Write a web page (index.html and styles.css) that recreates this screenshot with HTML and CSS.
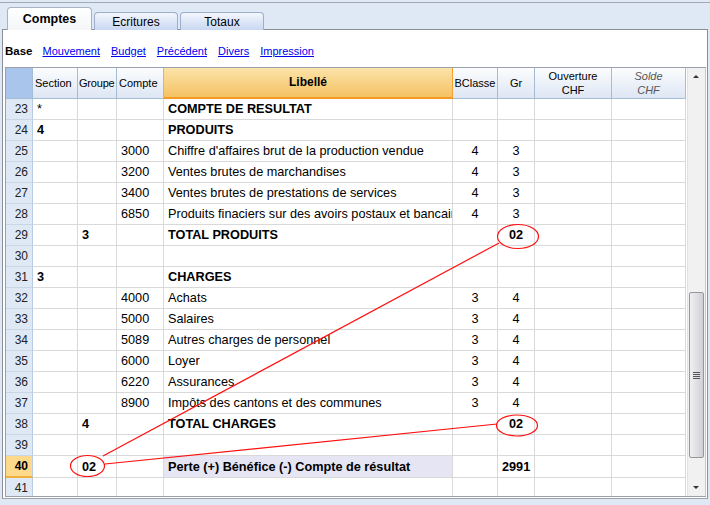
FILE: index.html
```html
<!DOCTYPE html>
<html lang="fr">
<head>
<meta charset="utf-8">
<title>Comptes</title>
<link rel="stylesheet" href="styles.css">
</head>
<body>
<div class="window">
  <div class="tabs">
    <div class="tab active">Comptes</div>
    <div class="tab">Ecritures</div>
    <div class="tab">Totaux</div>
  </div>
  <div class="panel">
    <div class="toolbar">
      <span class="cur">Base</span>
      <a href="#">Mouvement</a>
      <a href="#">Budget</a>
      <a href="#">Précédent</a>
      <a href="#">Divers</a>
      <a href="#">Impression</a>
    </div>
    <div class="grid">
      <div class="tablewrap">
        <table>
          <colgroup>
            <col class="c-num"><col class="c-sec"><col class="c-grp"><col class="c-cpt"><col class="c-lib"><col class="c-bcl"><col class="c-gr"><col class="c-ouv"><col class="c-sol">
          </colgroup>
          <thead>
            <tr>
              <th class="hnum"></th>
              <th class="hl">Section</th>
              <th class="hl tight">Groupe</th>
              <th class="hl">Compte</th>
              <th class="hlib">Libellé</th>
              <th>BClasse</th>
              <th>Gr</th>
              <th>Ouverture<br>CHF</th>
              <th class="hsol">Solde<br>CHF</th>
            </tr>
          </thead>
          <tbody>
            <tr><td class="num">23</td><td>*</td><td></td><td></td><td class="b">COMPTE DE RESULTAT</td><td></td><td></td><td></td><td></td></tr>
            <tr><td class="num">24</td><td class="b">4</td><td></td><td></td><td class="b">PRODUITS</td><td></td><td></td><td></td><td></td></tr>
            <tr><td class="num">25</td><td></td><td></td><td>3000</td><td>Chiffre d'affaires brut de la production vendue</td><td class="c">4</td><td class="c">3</td><td></td><td></td></tr>
            <tr><td class="num">26</td><td></td><td></td><td>3200</td><td>Ventes brutes de marchandises</td><td class="c">4</td><td class="c">3</td><td></td><td></td></tr>
            <tr><td class="num">27</td><td></td><td></td><td>3400</td><td>Ventes brutes de prestations de services</td><td class="c">4</td><td class="c">3</td><td></td><td></td></tr>
            <tr><td class="num">28</td><td></td><td></td><td>6850</td><td>Produits finaciers sur des avoirs postaux et bancaires</td><td class="c">4</td><td class="c">3</td><td></td><td></td></tr>
            <tr><td class="num">29</td><td></td><td class="b">3</td><td></td><td class="b">TOTAL PRODUITS</td><td></td><td class="c b">02</td><td></td><td></td></tr>
            <tr><td class="num">30</td><td></td><td></td><td></td><td></td><td></td><td></td><td></td><td></td></tr>
            <tr><td class="num">31</td><td class="b">3</td><td></td><td></td><td class="b">CHARGES</td><td></td><td></td><td></td><td></td></tr>
            <tr><td class="num">32</td><td></td><td></td><td>4000</td><td>Achats</td><td class="c">3</td><td class="c">4</td><td></td><td></td></tr>
            <tr><td class="num">33</td><td></td><td></td><td>5000</td><td>Salaires</td><td class="c">3</td><td class="c">4</td><td></td><td></td></tr>
            <tr><td class="num">34</td><td></td><td></td><td>5089</td><td>Autres charges de personnel</td><td class="c">3</td><td class="c">4</td><td></td><td></td></tr>
            <tr><td class="num">35</td><td></td><td></td><td>6000</td><td>Loyer</td><td class="c">3</td><td class="c">4</td><td></td><td></td></tr>
            <tr><td class="num">36</td><td></td><td></td><td>6220</td><td>Assurances</td><td class="c">3</td><td class="c">4</td><td></td><td></td></tr>
            <tr><td class="num">37</td><td></td><td></td><td>8900</td><td>Impôts des cantons et des communes</td><td class="c">3</td><td class="c">4</td><td></td><td></td></tr>
            <tr><td class="num">38</td><td></td><td class="b">4</td><td></td><td class="b">TOTAL CHARGES</td><td></td><td class="c b">02</td><td></td><td></td></tr>
            <tr><td class="num">39</td><td></td><td></td><td></td><td></td><td></td><td></td><td></td><td></td></tr>
            <tr class="sel"><td class="num">40</td><td></td><td class="b">02</td><td></td><td class="b lib-sel">Perte (+) Bénéfice (-) Compte de résultat</td><td></td><td class="c b">2991</td><td></td><td></td></tr>
            <tr><td class="num">41</td><td></td><td></td><td></td><td></td><td></td><td></td><td></td><td></td></tr>
          </tbody>
        </table>
      </div>
      <div class="scrollbar">
        <div class="arrow up"></div>
        <div class="track">
          <div class="thumb"><span class="grip"></span></div>
        </div>
        <div class="arrow down"></div>
      </div>
    </div>
  </div>
</div>
<svg class="notes" width="710" height="505" viewBox="0 0 710 505">
  <g fill="none" stroke="#ff1010" stroke-width="1.2">
    <ellipse cx="518" cy="236.5" rx="20.5" ry="12"/>
    <ellipse cx="517" cy="425.5" rx="20.5" ry="10.5"/>
    <ellipse cx="87.5" cy="466" rx="17" ry="10.5"/>
    <line x1="103" y1="456" x2="499" y2="243"/>
    <line x1="105" y1="464" x2="497" y2="424"/>
  </g>
</svg>
</body>
</html>
```

FILE: styles.css
```css
* { box-sizing: border-box; }
html, body { margin: 0; padding: 0; }
body {
  width: 710px;
  height: 505px;
  background: #dfe9f5;
  font-family: "Liberation Sans", Arial, sans-serif;
  font-size: 12.7px;
  color: #000;
  position: relative;
  overflow: hidden;
}
.window {
  margin-top: 2px;
  border-top: 1px solid #a4a8b2;
}
.tabs {
  height: 26px;
  display: flex;
  align-items: flex-end;
  padding-left: 7px;
  gap: 2px;
}
.tab {
  width: 84px;
  height: 18px;
  margin-bottom: -1px;
  border: 1px solid #9eaecb;
  border-bottom: none;
  border-radius: 4px 4px 0 0;
  background: linear-gradient(#f3f6fd, #c9d7f1);
  text-align: center;
  line-height: 18px;
  font-size: 12px;
  color: #000;
}
.tab.active {
  height: 23px;
  width: 85px;
  background: linear-gradient(#ffffff, #f4f6f8);
  border-color: #a7b3c2;
  font-weight: bold;
  font-size: 12.5px;
  line-height: 22px;
  position: relative;
  z-index: 2;
}
.panel {
  margin-left: 2px;
  width: 706px;
  height: 470px;
  background: #fff;
  border: 1px solid #8d8f98;
  border-bottom-color: #a0a2aa;
}
.toolbar {
  height: 37px;
  padding: 15px 0 0 2px;
  display: flex;
  font-size: 11px;
}
.toolbar .cur {
  font-weight: bold;
  font-size: 11.5px;
  margin-right: 10px;
}
.toolbar a {
  color: #0000ee;
  text-decoration: underline;
  margin-right: 11px;
}
.grid {
  margin-left: 2px;
  width: 701px;
  height: 430px;
  border: 1px solid #9aa0aa;
  border-right: none;
  display: flex;
}
.tablewrap {
  width: 682px;
  overflow: hidden;
}
table {
  border-collapse: separate;
  border-spacing: 0;
  table-layout: fixed;
  width: 680px;
}
col.c-num { width: 27px; }
col.c-sec { width: 45px; }
col.c-grp { width: 39px; }
col.c-cpt { width: 47px; }
col.c-lib { width: 289px; }
col.c-bcl { width: 45px; }
col.c-gr { width: 37px; }
col.c-ouv { width: 77px; }
col.c-sol { width: 74px; }
th {
  height: 31px;
  font-weight: normal;
  font-size: 11px;
  line-height: 14px;
  padding: 0 1px 1px;
  text-align: center;
  vertical-align: middle;
  background: linear-gradient(#fcfdfe, #dde6f3);
  border-right: 1px solid #a5bcd5;
  border-bottom: 1px solid #a5bcd5;
  white-space: nowrap;
  overflow: hidden;
}
th.hl { text-align: left; padding: 0 0 1px 2px; }
th.hl.tight { padding-left: 1px; letter-spacing: -0.2px; }
th.hnum { background: #a9c5ec; }
th.hlib {
  font-weight: bold;
  font-size: 12px;
  background: linear-gradient(#fbe3a8, #f5c264);
  border-right-color: #f4a032;
  border-bottom: 2px solid #f49a24;
}
th.hsol { font-style: italic; color: #555; }
td {
  height: 21px;
  padding: 0 4px;
  border-right: 1px solid #d9d9d9;
  border-bottom: 1px solid #d9d9d9;
  white-space: nowrap;
  overflow: hidden;
  vertical-align: middle;
  line-height: 20px;
}
td.num {
  background: #dfe9f6;
  text-align: right;
  padding: 0 4px 0 0;
  border-right-color: #b9cbe2;
  border-bottom-color: #c9d6e6;
  color: #222;
  font-size: 12px;
}
td.c { text-align: center; }
td.b { font-weight: bold; }
tr.sel td.num {
  background: #fdd98c;
  font-weight: bold;
  color: #000;
  border-bottom: 2px solid #f0b040;
}
td.lib-sel { background: #e5e5f4; }
.scrollbar {
  width: 19px;
  margin-left: 1px;
  display: flex;
  flex-direction: column;
  background: #f1f1f1;
  border-left: 1px solid #e2e2e2;
  border-right: 1px solid #c8c8c8;
}
.arrow {
  height: 17px;
  position: relative;
}
.arrow::after {
  content: "";
  position: absolute;
  left: 5px;
  border-left: 3px solid transparent;
  border-right: 3px solid transparent;
}
.arrow.up::after { top: 7px; border-bottom: 3px solid #333; }
.arrow.down::after { top: 7px; border-top: 3px solid #333; }
.track {
  flex: 1;
  padding-top: 207px;
}
.thumb {
  margin-left: 1px;
  width: 15px;
  height: 166px;
  border: 1px solid #979797;
  border-radius: 2px;
  background: linear-gradient(90deg, #f0f0f3, #dcdce2 60%, #cfcfd6);
  display: flex;
  align-items: center;
  justify-content: center;
}
.grip {
  width: 7px;
  height: 7px;
  background: repeating-linear-gradient(#555 0 1px, transparent 1px 2px);
}
.notes {
  position: absolute;
  left: 0;
  top: 0;
  pointer-events: none;
}
```
